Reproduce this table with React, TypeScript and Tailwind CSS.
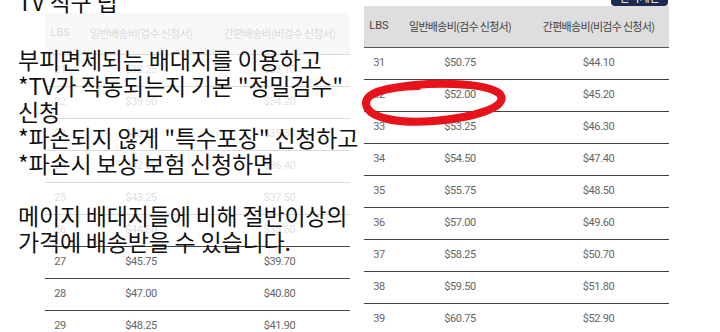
import React from "react";

type Row = { lbs: number; a: string; b: string };

const leftRows: Row[] = [
  { lbs: 21, a: "$38.25", b: "$33.10" },
  { lbs: 22, a: "$39.50", b: "$34.20" },
  { lbs: 23, a: "$40.75", b: "$35.30" },
  { lbs: 24, a: "$42.00", b: "$36.40" },
  { lbs: 25, a: "$43.25", b: "$37.50" },
  { lbs: 26, a: "$44.50", b: "$38.60" },
  { lbs: 27, a: "$45.75", b: "$39.70" },
  { lbs: 28, a: "$47.00", b: "$40.80" },
  { lbs: 29, a: "$48.25", b: "$41.90" },
];

const rightRows: Row[] = [
  { lbs: 31, a: "$50.75", b: "$44.10" },
  { lbs: 32, a: "$52.00", b: "$45.20" },
  { lbs: 33, a: "$53.25", b: "$46.30" },
  { lbs: 34, a: "$54.50", b: "$47.40" },
  { lbs: 35, a: "$55.75", b: "$48.50" },
  { lbs: 36, a: "$57.00", b: "$49.60" },
  { lbs: 37, a: "$58.25", b: "$50.70" },
  { lbs: 38, a: "$59.50", b: "$51.80" },
  { lbs: 39, a: "$60.75", b: "$52.90" },
];

function PriceTable({ rows }: { rows: Row[] }) {
  return (
    <div className="w-[305px] flex flex-col">
      <div className="grid grid-cols-[28px_136px_141px] h-[42px] bg-[#dedede] border-b border-[#555] items-center text-[#444] text-[11px] tracking-[-0.7px] font-['Noto_Sans_CJK_KR',sans-serif]">
        <div className="text-center text-[11px] tracking-normal font-['Roboto',sans-serif] pl-[2px]">LBS</div>
        <div className="text-center">일반배송비(검수 신청서)</div>
        <div className="text-center">간편배송비(비검수 신청서)</div>
      </div>
      {rows.map((r) => (
        <div
          key={r.lbs}
          className="grid grid-cols-[28px_136px_141px] h-[32px] border-b border-[#444] items-center text-[#666] text-[11px] tracking-[-0.4px] font-['Roboto',sans-serif]"
        >
          <div className="text-center pl-[2px]">{r.lbs}</div>
          <div className="text-center">{r.a}</div>
          <div className="text-center">{r.b}</div>
        </div>
      ))}
    </div>
  );
}

export default function App() {
  const lines = [
    "부피면제되는 배대지를 이용하고",
    '*TV가 작동되는지 기본 "정밀검수"',
    "신청",
    '*파손되지 않게 "특수포장" 신청하고',
    "*파손시 보상 보험 신청하면",
    "\u00a0",
    "메이지 배대지들에 비해 절반이상의",
    "가격에 배송받을 수 있습니다.",
  ];
  return (
    <div className="relative w-[720px] h-[332px] overflow-hidden bg-white flex gap-[14px] pl-[45px]">
      <div className="flex flex-col pt-[13px]">
        <PriceTable rows={leftRows} />
      </div>
      <div className="flex flex-col">
        <div className="h-[13px] flex justify-end pr-[1px]">
          <div className="h-[21px] mt-[-15px] w-[57px] rounded-[4px] bg-[#1c2a4f] text-white text-[11px] flex items-end justify-center pb-[3px] font-['Noto_Sans_CJK_KR',sans-serif] leading-none">
            견적계산
          </div>
        </div>
        <PriceTable rows={rightRows} />
      </div>

      {/* white overlay with tip text */}
      <div className="absolute left-0 top-0 w-[358px] h-[243px] bg-white/80 pl-[18px] text-[#111] text-[23px] tracking-[-0.2px] leading-[26px] font-['Noto_Sans_CJK_KR',sans-serif]">
        <div className="mt-[-12px] mb-[32px] whitespace-nowrap">TV 직구 팁</div>
        {lines.map((l, i) => (
          <div key={i} className="whitespace-nowrap">
            {l}
          </div>
        ))}
      </div>

      {/* red hand-drawn circle */}
      <svg
        className="absolute left-[358px] top-[78px]"
        width="152"
        height="52"
        viewBox="0 0 152 52"
        fill="none"
      >
        <path
          d="M30 11 C70 3, 128 4, 142 16 C152 30, 112 40, 76 43 C40 46, 8 40, 8 25 C8 15, 28 9, 60 8"
          stroke="#e8121a"
          strokeWidth="8"
          strokeLinecap="round"
        />
      </svg>
    </div>
  );
}
